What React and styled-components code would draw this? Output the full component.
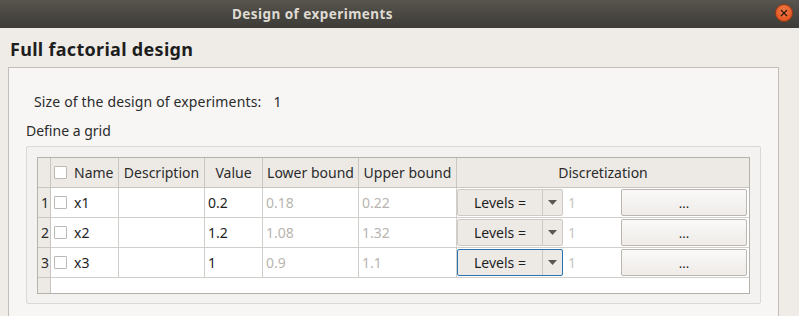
import styled, { createGlobalStyle } from 'styled-components';

const GlobalStyle = createGlobalStyle`
  html, body {
    margin: 0;
    padding: 0;
    background: #efebe7;
    font-family: "Noto Sans", "DejaVu Sans", sans-serif;
    overflow: hidden;
  }
`

const rows = [
  { id: 1, name: "x1", value: "0.2", lower: "0.18", upper: "0.22" },
  { id: 2, name: "x2", value: "1.2", lower: "1.08", upper: "1.32" },
  { id: 3, name: "x3", value: "1", lower: "0.9", upper: "1.1", focused: true },
];

function App() {
  return (
    <Window>
      <GlobalStyle />
      <TitleBar>
        <TitleText>Design of experiments</TitleText>
        <CloseBtn>
          <svg width="8" height="8" viewBox="0 0 8 8">
            <path d="M1 1 L7 7 M7 1 L1 7" stroke="#3a1a0c" strokeWidth="1.4" />
          </svg>
        </CloseBtn>
      </TitleBar>
      <Content>
        <Heading>Full factorial design</Heading>
        <Panel>
          <SizeLine>Size of the design of experiments:<span>1</span></SizeLine>
          <GroupLabel>Define a grid</GroupLabel>
          <GroupBox>
            <Table>
              <Corner />
              <HeadCell $left>
                <Check />
                <span>Name</span>
              </HeadCell>
              <HeadCell>Description</HeadCell>
              <HeadCell>Value</HeadCell>
              <HeadCell>Lower bound</HeadCell>
              <HeadCell>Upper bound</HeadCell>
              <HeadCell $last>Discretization</HeadCell>

              {rows.map((r) => (
                <Row key={r.id}>
                  <RowNum>{r.id}</RowNum>
                  <Cell>
                    <Check />
                    <span>{r.name}</span>
                  </Cell>
                  <Cell />
                  <Cell>{r.value}</Cell>
                  <Cell $muted>{r.lower}</Cell>
                  <Cell $muted>{r.upper}</Cell>
                  <DiscCell>
                    <Combo $focused={r.focused}>
                      <ComboText>Levels =</ComboText>
                      <ComboArrow>
                        <svg width="9" height="5" viewBox="0 0 9 5">
                          <path d="M0 0 L9 0 L4.5 5 Z" fill="#5a5853" />
                        </svg>
                      </ComboArrow>
                    </Combo>
                    <Spin>1</Spin>
                    <DotsBtn>...</DotsBtn>
                  </DiscCell>
                </Row>
              ))}
              <Row>
                <FillNum />
                <Filler />
              </Row>
            </Table>
          </GroupBox>
        </Panel>
      </Content>
    </Window>
  )
}

const Window = styled.div`
  width: 799px;
  height: 316px;
  display: flex;
  flex-direction: column;
  background: #efebe7;
`

const TitleBar = styled.div`
  height: 28px;
  flex: none;
  display: flex;
  align-items: center;
  background: linear-gradient(#58544e, #3c3b37);
  padding-left: 232px;
  padding-right: 6px;
`

const TitleText = styled.div`
  flex: 1;
  color: #dfdbd2;
  font-weight: bold;
  font-size: 13.5px;
  letter-spacing: 0.45px;
`

const CloseBtn = styled.div`
  width: 16px;
  height: 16px;
  border-radius: 50%;
  background: radial-gradient(circle at 50% 35%, #f07a48, #df4b16);
  border: 0.5px solid #9b3812;
  display: flex;
  align-items: center;
  justify-content: center;
  margin-bottom: 2px;
`

const Content = styled.div`
  flex: 1;
  padding: 10px 20px 0 8px;
  display: flex;
  flex-direction: column;
`

const Heading = styled.div`
  font-weight: bold;
  font-size: 18px;
  letter-spacing: 0.3px;
  color: #1e1e1e;
  padding-left: 2px;
  height: 29px;
  line-height: 22px;
`

const Panel = styled.div`
  flex: 1;
  background: #f7f6f5;
  border: 1px solid #c2beb9;
  border-bottom: none;
  padding: 19px 16px 0 17px;
  display: flex;
  flex-direction: column;
`

const SizeLine = styled.div`
  font-size: 14px;
  letter-spacing: 0.15px;
  color: #2b2b2b;
  padding-left: 8px;
  height: 30px;
  line-height: 30px;
  span {
    margin-left: 12px;
  }
`

const GroupLabel = styled.div`
  font-size: 14px;
  color: #2b2b2b;
  margin-top: 4px;
  height: 25px;
  line-height: 20px;
`

const GroupBox = styled.div`
  width: 735px;
  height: 158px;
  box-sizing: border-box;
  border: 1px solid #dcd9d5;
  border-radius: 2px;
  background: #f3f2f0;
  padding: 10px 11px 0 10px;
`

const Table = styled.div`
  display: grid;
  grid-template-columns: 13px 68px 86px 58px 96px 98px 292px;
  grid-template-rows: 30px 30px 30px 30px 15px;
  border: 1px solid #b5b1ab;
  width: max-content;
  background: #ffffff;
  font-size: 14px;
`

const Row = styled.div`
  display: contents;
`

const Corner = styled.div`
  background: #edeae6;
  border-right: 1px solid #c9c5c0;
  border-bottom: 1px solid #c9c5c0;
`

const HeadCell = styled.div`
  background: #edeae6;
  border-right: ${(p) => (p.$last ? "none" : "1px solid #c9c5c0")};
  border-bottom: 1px solid #c9c5c0;
  display: flex;
  align-items: center;
  gap: 7px;
  color: #2b2b2b;
  white-space: nowrap;
  overflow: hidden;
  padding-left: ${(p) => (p.$left ? "3px" : "0")};
  justify-content: ${(p) => (p.$left ? "flex-start" : "center")};
`

const RowNum = styled.div`
  background: #edeae6;
  border-right: 1px solid #c9c5c0;
  border-bottom: 1px solid #c9c5c0;
  display: flex;
  align-items: center;
  justify-content: flex-end;
  padding-right: 1px;
  color: #2b2b2b;
`

const FillNum = styled.div`
  background: #edeae6;
  border-right: 1px solid #c9c5c0;
`

const Filler = styled.div`
  grid-column: span 6;
`

const Cell = styled.div`
  border-right: 1px solid #d2cfcb;
  border-bottom: 1px solid #d2cfcb;
  display: flex;
  align-items: center;
  gap: 7px;
  padding-left: 3px;
  color: ${(p) => (p.$muted ? "#b8b5b0" : "#1e1e1e")};
  white-space: nowrap;
  overflow: hidden;
`

const Check = styled.div`
  width: 13px;
  height: 13px;
  box-sizing: border-box;
  border: 1px solid #bcb8b3;
  background: #fff;
  border-radius: 1px;
  flex: none;
`

const DiscCell = styled.div`
  border-bottom: 1px solid #d2cfcb;
  display: grid;
  grid-template-columns: 106px 58px 126px;
  padding: 1px 0 1px 0;
  box-sizing: border-box;
`

const Combo = styled.div`
  display: flex;
  box-sizing: border-box;
  border: 1px solid ${(p) => (p.$focused ? "#2a73b3" : "#cdc9c4")};
  border-radius: 2px;
  background: #edeae6;
`

const ComboText = styled.div`
  flex: 1;
  display: flex;
  align-items: center;
  justify-content: center;
  color: #1e1e1e;
  border-right: 1px solid #cdc9c4;
`

const ComboArrow = styled.div`
  width: 19px;
  display: flex;
  align-items: center;
  justify-content: center;
`

const Spin = styled.div`
  display: flex;
  align-items: center;
  padding-left: 5px;
  color: #c8c5c1;
`

const DotsBtn = styled.div`
  box-sizing: border-box;
  border: 1px solid #b9b5b0;
  border-radius: 2px;
  background: linear-gradient(#fbfaf9, #eeebe8);
  display: flex;
  align-items: center;
  justify-content: center;
  color: #1e1e1e;
  font-size: 13px;
`

export default App
